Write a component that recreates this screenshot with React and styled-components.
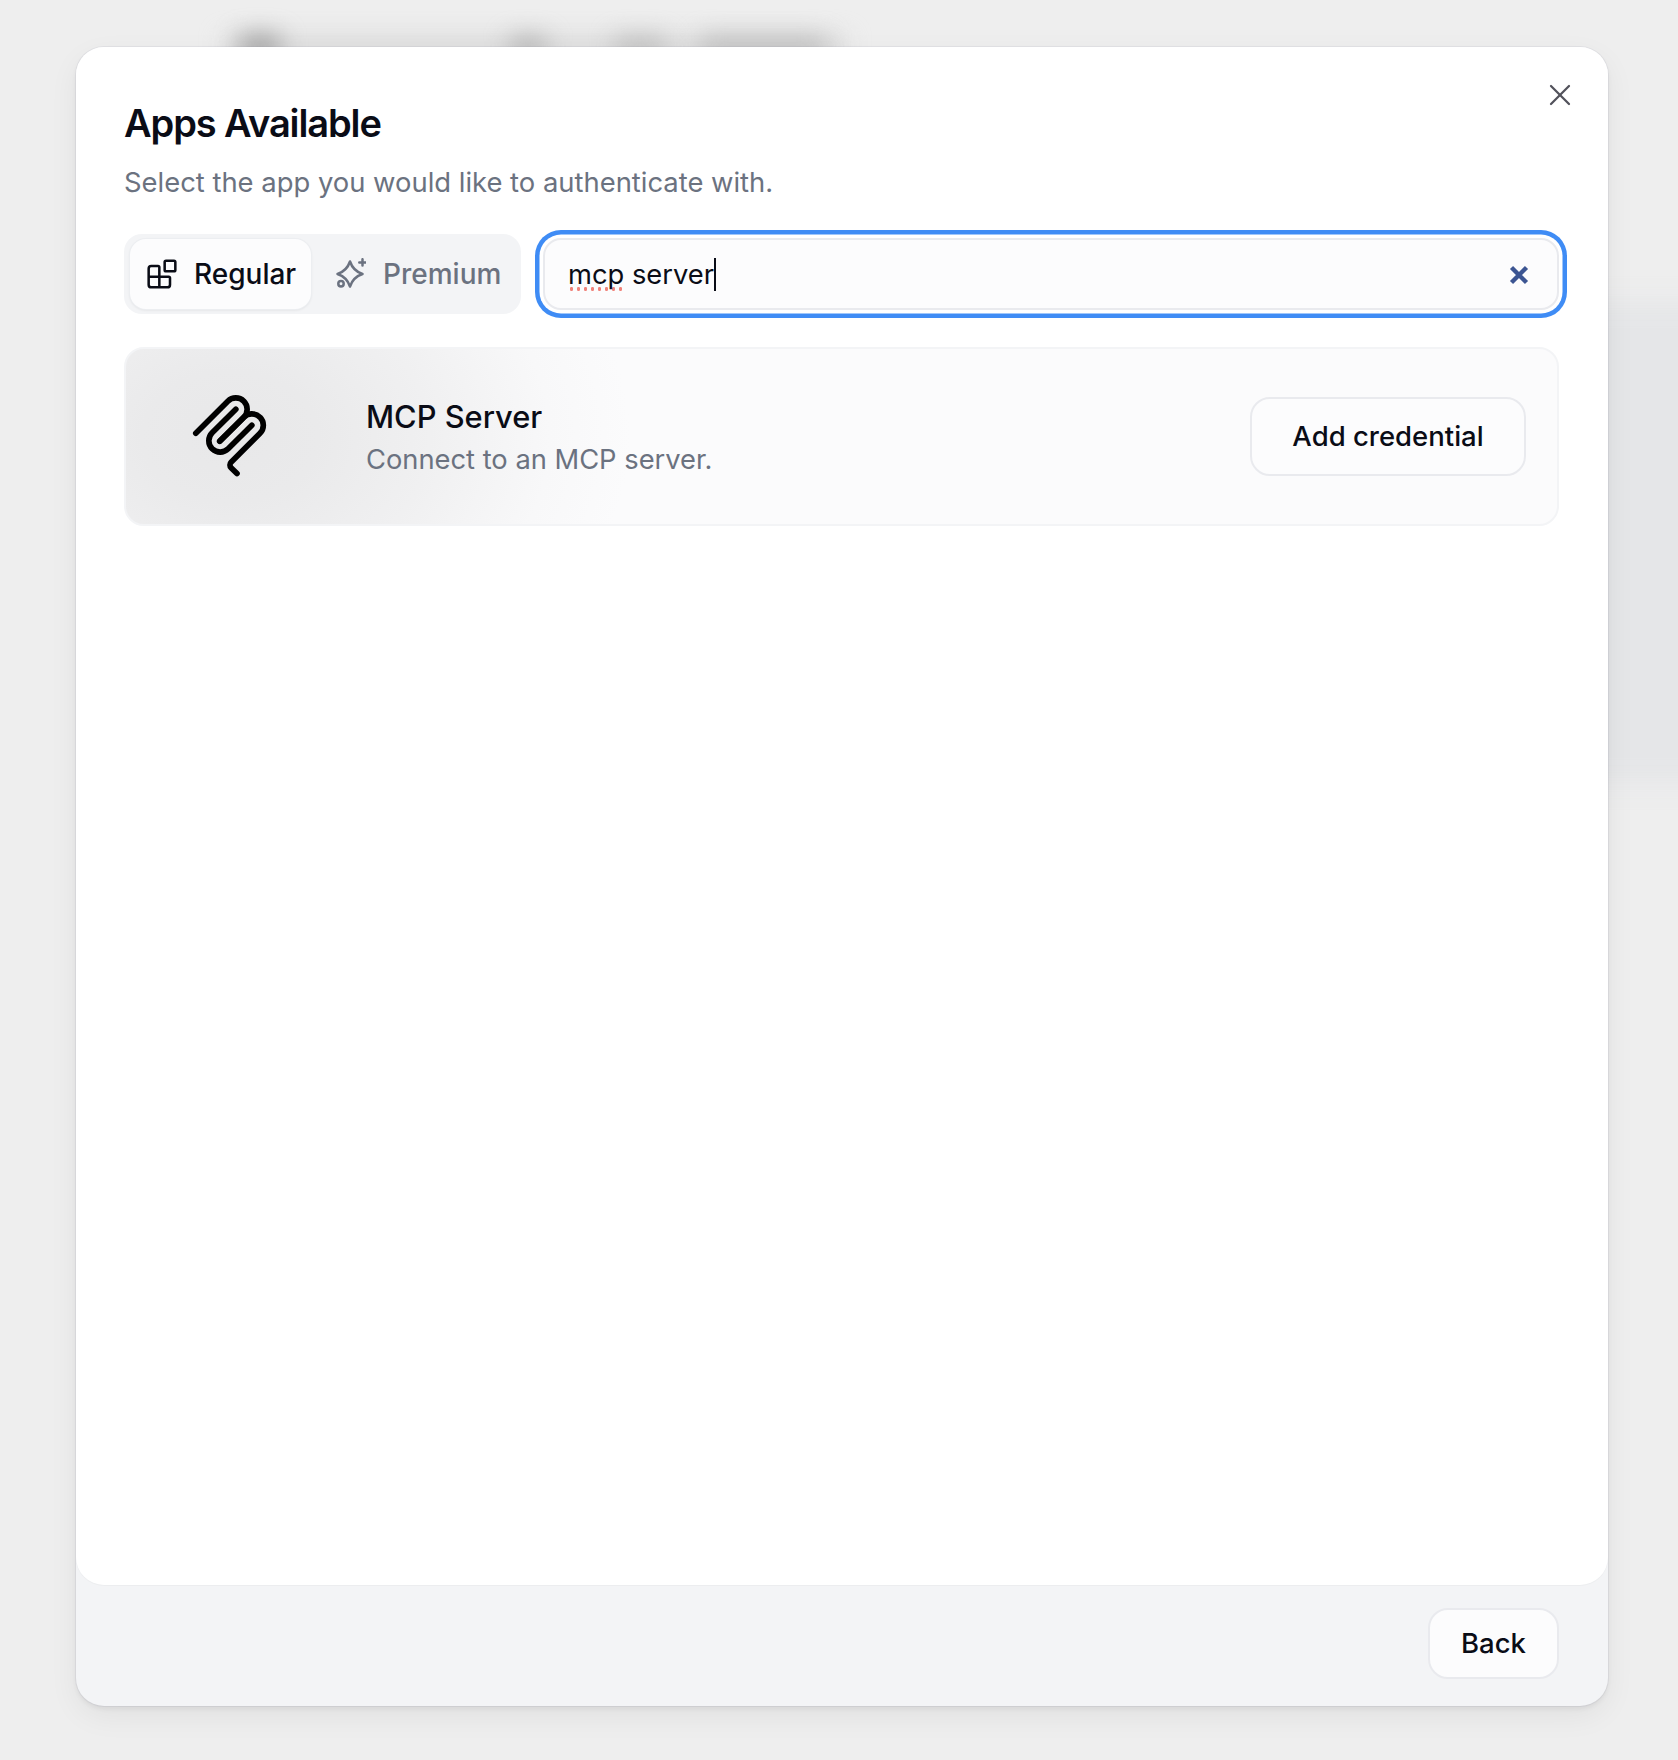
import React from 'react';
import styled, { createGlobalStyle } from 'styled-components';
import { Blocks, X } from 'lucide-react';

const GlobalStyle = createGlobalStyle`
  html, body {
    margin: 0;
    padding: 0;
    background: #eeeeee;
    font-family: Inter, "Liberation Sans", sans-serif;
    -webkit-font-smoothing: antialiased;
  }
  * { box-sizing: border-box; }
`;

const Page = styled.div`
  position: relative;
  height: 1760px;
  overflow: hidden;
  padding: 47px 70px 54px 76px;
  display: flex;
`;

// Blurred page behind the dialog
const Blur = styled.div`
  position: absolute;
  left: ${({ $x }) => $x}px;
  top: ${({ $y }) => $y}px;
  width: ${({ $w }) => $w}px;
  height: ${({ $h }) => $h}px;
  background: ${({ $c }) => $c};
  filter: blur(${({ $b }) => $b}px);
`;

const Modal = styled.div`
  position: relative;
  flex: 1;
  display: flex;
  flex-direction: column;
  background: #f3f4f6;
  border-radius: 28px;
  box-shadow:
    0 0 0 1px rgba(90, 90, 130, 0.07),
    0 3px 5px rgba(0, 0, 0, 0.06),
    0 10px 30px rgba(0, 0, 0, 0.06);
`;

const Panel = styled.div`
  position: relative;
  flex: 1;
  background: #ffffff;
  border-radius: 28px;
  box-shadow: 0 1px 1px rgba(0, 0, 0, 0.03);
  padding: 54px 49px 0 48px;
`;

const CloseButton = styled.button`
  position: absolute;
  top: 26px;
  right: 26px;
  width: 44px;
  height: 44px;
  padding: 0;
  border: none;
  background: none;
  display: flex;
  align-items: center;
  justify-content: center;
  color: #52525b;
`;

const Title = styled.h1`
  margin: 0;
  font-size: 38px;
  line-height: 44px;
  font-weight: 600;
  letter-spacing: -1.1px;
  color: #0a0c16;
`;

const Subtitle = styled.p`
  margin: 17px 0 0;
  font-size: 27.4px;
  line-height: 40px;
  color: #6b7280;
`;

const Toolbar = styled.div`
  display: flex;
  align-items: center;
  gap: 22px;
  margin-top: 32px;
`;

const Tabs = styled.div`
  display: flex;
  align-items: stretch;
  width: 397px;
  height: 80px;
  padding: 5px 6px;
  background: #f3f4f6;
  border-radius: 18px;
`;

const Tab = styled.div`
  display: flex;
  align-items: center;
  gap: ${({ $active }) => ($active ? '16px' : '17px')};
  height: 70px;
  padding: ${({ $active }) => ($active ? '0 0 0 16px' : '0 0 0 23px')};
  width: ${({ $active }) => ($active ? '181px' : 'auto')};
  border-radius: 16px;
  font-size: 28px;
  font-weight: 500;
  color: ${({ $active }) => ($active ? '#0a0c16' : '#6b7280')};
  background: ${({ $active }) => ($active ? '#fcfcfd' : 'transparent')};
  box-shadow: ${({ $active }) => ($active ? '0 0 0 1px #eceef1, 0 1px 3px rgba(0, 0, 0, 0.1)' : 'none')};
`;

const SearchBox = styled.div`
  flex: 1;
  height: 72px;
  display: flex;
  align-items: center;
  justify-content: space-between;
  padding: 1px 28px 0 23px;
  background: #fcfcfd;
  border: 2px solid #e9eaee;
  border-radius: 18px;
  box-shadow: 0 0 0 3.5px #ffffff, 0 0 0 8px #3f8cf5;
  font-size: 27.3px;
  color: #0a0c16;
`;

const SearchText = styled.div`
  display: flex;
  align-items: center;
  white-space: pre;
`;

const Misspelled = styled.span`
  background-image: radial-gradient(circle, #f0837b 1.7px, transparent 2px);
  background-size: 7px 4px;
  background-repeat: repeat-x;
  background-position: 0 29px;
`;

const Caret = styled.span`
  display: inline-block;
  width: 2px;
  height: 33px;
  background: #0a0c16;
`;

const ClearIcon = styled.svg`
  display: block;
  width: 20px;
  height: 20px;
  color: #3c5592;
`;

const Card = styled.div`
  display: flex;
  align-items: center;
  margin-top: 33px;
  height: 179px;
  padding-right: 31px;
  border: 2px solid #f3f4f6;
  border-radius: 20px;
  background:
    radial-gradient(ellipse 400px 300px at 104px 88px, #e8e8e9 0%, #eaeaeb 22%, #f0f0f1 50%, #f8f8f9 80%, rgba(251, 251, 252, 0) 100%),
    #fbfbfc;
`;

const LogoSlot = styled.div`
  width: 208px;
  margin-right: 32px;
  padding-bottom: 7px;
  flex-shrink: 0;
  display: flex;
  justify-content: center;
`;

const CardText = styled.div`
  flex: 1;
  min-width: 0;
  padding-top: 1px;
`;

const CardTitle = styled.div`
  font-size: 30.8px;
  line-height: 44px;
  font-weight: 500;
  color: #0a0c16;
`;

const CardDescription = styled.div`
  margin-top: 1px;
  font-size: 27.3px;
  line-height: 40px;
  color: #6b7280;
`;

const OutlineButton = styled.button`
  display: flex;
  align-items: center;
  justify-content: center;
  width: ${({ $width }) => $width}px;
  height: ${({ $height }) => $height}px;
  padding: 0 0 2px;
  background: #fcfcfd;
  border: 2px solid #e9eaee;
  border-radius: 20px;
  font-family: inherit;
  font-size: 27.5px;
  font-weight: 500;
  color: #0a0c16;
`;

const Footer = styled.div`
  height: 121px;
  flex-shrink: 0;
  display: flex;
  justify-content: flex-end;
  align-items: flex-start;
  padding: 23px 49px 0 0;
`;

const McpLogo = () => (
  <svg width="92" height="92" viewBox="0 0 195 195" fill="none" stroke="#000" strokeWidth="12" strokeLinecap="round">
    <path d="M25 97.8528L92.8822 29.9706C102.255 20.598 117.451 20.598 126.823 29.9706C136.196 39.3431 136.196 54.5391 126.823 63.9117L75.5581 115.177" />
    <path d="M76.2652 114.47L126.823 63.9117C136.196 54.5391 151.392 54.5391 160.765 63.9117L161.118 64.2652C170.491 73.6378 170.491 88.8338 161.118 98.2063L99.7248 159.6C96.6006 162.724 96.6006 167.789 99.7248 170.913L112.331 183.52" />
    <path d="M109.853 46.9411L59.6482 97.1457C50.2756 106.518 50.2756 121.714 59.6482 131.087C69.0208 140.459 84.2167 140.459 93.5893 131.087L143.794 80.8822" />
  </svg>
);

const PremiumIcon = () => (
  <svg width="32" height="32" viewBox="0 0 32 32" fill="none" stroke="#6b7280" strokeWidth="2.5" strokeLinecap="round" strokeLinejoin="round">
    <path d="M16 3.5C18 9.5 22.5 14 28.5 16C22.5 18 18 22.5 16 28.5C14 22.5 9.5 18 3.5 16C9.5 14 14 9.5 16 3.5Z" />
    <path d="M28.5 1.2V7.6M25.3 4.4H31.7" />
    <circle cx="7" cy="25.7" r="2.7" />
  </svg>
);

const App = () => (
  <>
    <GlobalStyle />
    <Page>
      <Blur $x={225} $y={38} $w={620} $h={16} $c="#d4d4d4" $b={12} />
      <Blur $x={240} $y={36} $w={40} $h={20} $c="#999999" $b={12} />
      <Blur $x={510} $y={38} $w={36} $h={18} $c="#aeaeae" $b={12} />
      <Blur $x={615} $y={38} $w={50} $h={18} $c="#bababa" $b={12} />
      <Blur $x={700} $y={38} $w={125} $h={18} $c="#bababa" $b={12} />
      <Blur $x={1500} $y={302} $w={300} $h={482} $c="#e5e6e8" $b={12} />
      <Modal>
        <Panel>
          <CloseButton aria-label="Close">
            <X size={36} strokeWidth={1.5} />
          </CloseButton>
          <Title>Apps Available</Title>
          <Subtitle>Select the app you would like to authenticate with.</Subtitle>
          <Toolbar>
            <Tabs>
              <Tab $active>
                <Blocks size={32} strokeWidth={1.9} />
                Regular
              </Tab>
              <Tab>
                <PremiumIcon />
                Premium
              </Tab>
            </Tabs>
            <SearchBox>
              <SearchText>
                <Misspelled>mcp</Misspelled> server
                <Caret />
              </SearchText>
              <ClearIcon viewBox="0 0 20 20" fill="none" stroke="currentColor" strokeWidth="4.4">
                <path d="M2.5 2.5L17.5 17.5M17.5 2.5L2.5 17.5" />
              </ClearIcon>
            </SearchBox>
          </Toolbar>
          <Card>
            <LogoSlot>
              <McpLogo />
            </LogoSlot>
            <CardText>
              <CardTitle>MCP Server</CardTitle>
              <CardDescription>Connect to an MCP server.</CardDescription>
            </CardText>
            <OutlineButton $width={276} $height={79}>Add credential</OutlineButton>
          </Card>
        </Panel>
        <Footer>
          <OutlineButton $width={131} $height={71}>Back</OutlineButton>
        </Footer>
      </Modal>
    </Page>
  </>
);

export default App;
